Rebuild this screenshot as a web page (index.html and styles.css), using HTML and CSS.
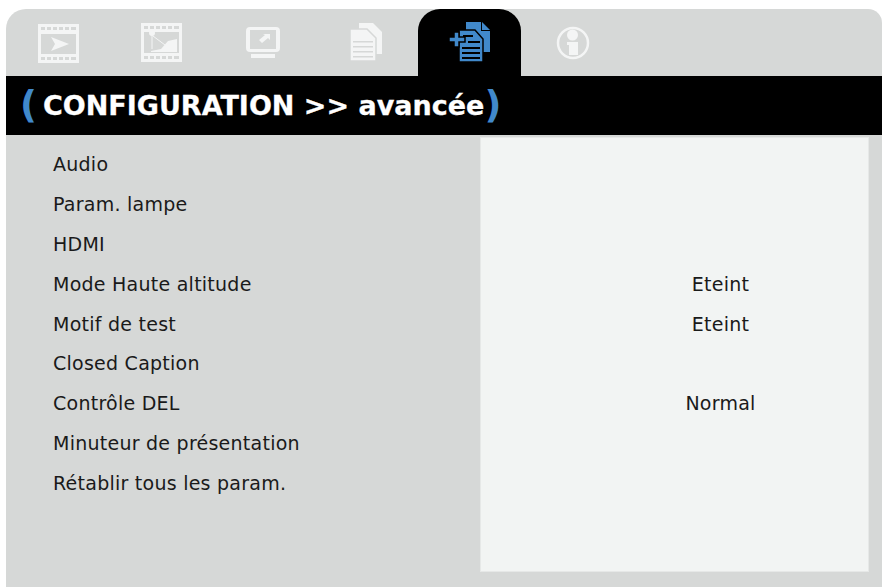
FILE: index.html
```html
<!DOCTYPE html>
<html lang="fr">
  <head>
    <meta charset="UTF-8" />
    <title>CONFIGURATION avancée</title>
    <link rel="stylesheet" href="styles.css">
  </head>
  <body>
    <main class="osd">
      <nav class="tabs">
        <div class="tab">
          <svg class="icon" width="42" height="40" viewBox="0 0 42 40">
            <path class="white" fill-rule="evenodd" d="M0 1h41v39H0zM3 11v20h35V11z"/>
            <path class="gray" d="M3 4h4v3H3zM9 4h4v3H9zM15 4h4v3h-4zM21 4h4v3h-4zM27 4h4v3h-4zM33 4h5v3h-5zM3 34h4v3H3zM9 34h4v3H9zM15 34h4v3h-4zM21 34h4v3h-4zM27 34h4v3h-4zM33 34h5v3h-5z"/>
            <path class="white" d="M13 14l18 7-18 7 4-7z"/>
          </svg>
        </div>
        <div class="tab">
          <svg class="icon" width="42" height="40" viewBox="0 0 42 40">
            <path class="white" fill-rule="evenodd" d="M0 0h41v39H0zM3 9v21h35V9z"/>
            <path class="gray" d="M3 3h4v3H3zM9 3h4v3H9zM15 3h4v3h-4zM21 3h4v3h-4zM27 3h4v3h-4zM33 3h5v3h-5zM3 33h4v3H3zM9 33h4v3H9zM15 33h4v3h-4zM21 33h4v3h-4zM27 33h4v3h-4zM33 33h5v3h-5z"/>
            <circle class="white" cx="11" cy="10" r="3"/>
            <path class="white" d="M10 28l10-2 7-8 9-2v13H10z"/>
            <path class="line" d="M11 12v14M12 13l12 9"/>
          </svg>
        </div>
        <div class="tab">
          <svg class="icon" width="36" height="32" viewBox="0 0 36 32">
            <path class="white" fill-rule="evenodd" d="M4 0h26q4 0 4 4v17q0 4-4 4H4q-4 0-4-4V4q0-4 4-4zM4 3v19h26V3z"/>
            <path class="white" d="M5 27h24v4H5zM13 13l6-5-2-1h7v6l-2-2-6 5z"/>
          </svg>
        </div>
        <div class="tab">
          <svg class="icon" width="34" height="40" viewBox="0 0 34 40">
            <path class="white" d="M9 0h14l9 9v22H9z"/>
            <path class="white outline-gray" d="M0 6h17l9 9v23H0z"/>
            <path class="gray" d="M3 18h20v1.500H3zM3 23h20v1.500H3zM3 28h20v1.500H3zM3 33h20v1.500H3z"/>
          </svg>
        </div>
        <div class="tab active">
          <svg class="icon" width="44" height="42" viewBox="0 0 44 42">
            <path class="blue" d="M18 0h16l8 8v22H18z"/>
            <path class="ink" d="M34 0v8h8v1h-9V0z"/>
            <path class="blue outlined" d="M11 8h16l8 9v23H11z"/>
            <path class="ink" d="M15 13h10v2H15zM20 19h12v2H20zM14 25h18v2H14zM14 30h18v2H14zM14 35h18v2H14z"/>
            <path class="blue outlined" d="M6 10h5v5h6v5h-6v5H6v-5H1v-5h5z"/>
          </svg>
        </div>
        <div class="tab">
          <svg class="icon" width="34" height="34" viewBox="0 0 34 34">
            <circle class="ring" cx="17" cy="17" r="15"/>
            <circle class="white" cx="16.500" cy="9" r="5.500"/>
            <path class="white" d="M11 16h11v13h-9V19h-2z"/>
          </svg>
        </div>
      </nav>
      <h1 class="title"><span class="paren">(</span><span class="heading">CONFIGURATION &gt;&gt; avancée</span><span class="paren">)</span></h1>
      <section class="content">
        <ul class="labels">
          <li>Audio</li>
          <li>Param. lampe</li>
          <li>HDMI</li>
          <li>Mode Haute altitude</li>
          <li>Motif de test</li>
          <li>Closed Caption</li>
          <li>Contrôle DEL</li>
          <li>Minuteur de présentation</li>
          <li>Rétablir tous les param.</li>
        </ul>
        <ul class="values">
          <li></li>
          <li></li>
          <li></li>
          <li>Eteint</li>
          <li>Eteint</li>
          <li></li>
          <li>Normal</li>
          <li></li>
          <li></li>
        </ul>
      </section>
    </main>
  </body>
</html>
```

FILE: styles.css
```css
html,
body {
  height: 100%;
}
body {
  margin: 0;
  background: #fff;
  font-family: "DejaVu Sans", sans-serif;
  color: #1a1a1a;
}
.osd {
  height: 578px;
  margin: 9px 0 0 6px;
  background: #d6d8d7;
  border-radius: 20px 14px 0 0;
  display: flex;
  flex-direction: column;
  overflow: hidden;
}
.tabs {
  height: 67px;
  display: flex;
}
.tab {
  width: 103px;
  display: flex;
  justify-content: center;
  align-items: center;
}
.tab:first-child {
  width: 105px;
}
.tab:nth-child(2),
.tab:nth-child(3) {
  width: 102px;
}
.tab.active {
  background: #000;
  border-radius: 22px 22px 0 0;
}
.white {
  fill: #f4f5f5;
}
.gray {
  fill: #d6d8d7;
}
.blue {
  fill: #4189cb;
}
.ink {
  fill: #000;
}
.outlined {
  stroke: #000;
  stroke-width: 1.500;
}
.outline-gray {
  stroke: #d6d8d7;
  stroke-width: 1.500;
}
.line {
  fill: none;
  stroke: #f4f5f5;
  stroke-width: 1;
}
.ring {
  fill: none;
  stroke: #f4f5f5;
  stroke-width: 2.500;
}
.title {
  height: 59px;
  margin: 0;
  padding-left: 14px;
  background: #000;
  color: #fff;
  font-size: 27px;
  font-weight: bold;
  line-height: 59px;
  white-space: nowrap;
  display: flex;
  align-items: center;
}
.heading {
  margin-left: 6px;
  -webkit-text-stroke: 0.3px #fff;
}
.paren {
  color: #4189cb;
  font-size: 37px;
  font-weight: bold;
  line-height: 59px;
}
.content {
  flex: 1;
  display: flex;
  min-height: 0;
}
.labels,
.values {
  margin: 0;
  list-style: none;
}
.labels li,
.values li {
  height: 39.9px;
  line-height: 39.9px;
  font-size: 19px;
  letter-spacing: 0.25px;
}
.labels {
  width: 474px;
  padding: 10px 0 0 47px;
  box-sizing: border-box;
}
.values {
  width: 389px;
  margin: 2px 0 15px;
  padding: 7px 0 0 92px;
  box-sizing: border-box;
  background: #f2f4f3;
  border: 1px solid #e6e8e7;
  text-align: center;
}
```
